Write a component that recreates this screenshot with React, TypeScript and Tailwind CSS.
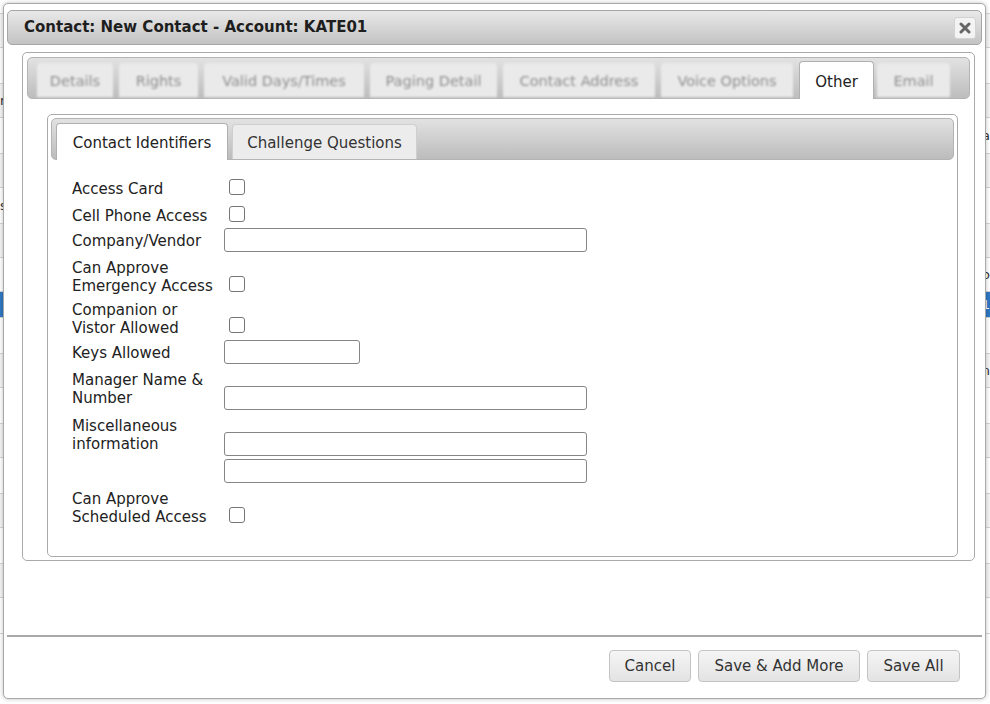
import React from 'react';

const outerTabs = [
  { label: 'Details', w: 'w-[76px]' },
  { label: 'Rights', w: 'w-[79px]' },
  { label: 'Valid Days/Times', w: 'w-[160px]' },
  { label: 'Paging Detail', w: 'w-[127px]' },
  { label: 'Contact Address', w: 'w-[152px]' },
  { label: 'Voice Options', w: 'w-[132px]' },
];

const bgRows = [
  { h: 'h-[14px]', blue: false },
  { h: 'h-[34px]', blue: false },
  { h: 'h-[36px]', blue: false },
  { h: 'h-[34px]', blue: false },
  { h: 'h-[36px]', blue: false },
  { h: 'h-[34px]', blue: false },
  { h: 'h-[36px]', blue: false },
  { h: 'h-[34px]', blue: false },
  { h: 'h-[34px]', blue: false },
  { h: 'h-[26px]', blue: true },
  { h: 'h-[36px]', blue: false },
  { h: 'h-[34px]', blue: false },
  { h: 'h-[36px]', blue: false },
  { h: 'h-[34px]', blue: false },
  { h: 'h-[36px]', blue: false },
  { h: 'h-[34px]', blue: false },
  { h: 'h-[36px]', blue: false },
  { h: 'h-[34px]', blue: false },
  { h: 'h-[36px]', blue: false },
];

const Checkbox = ({ className = '' }: { className?: string }) => (
  <span className={`block h-4 w-4 rounded-[3px] border border-[#767676] bg-white ${className}`} />
);

const TextBox = ({ w, className = '' }: { w: string; className?: string }) => (
  <input type="text" className={`block h-6 ${w} rounded-[3px] border border-[#858585] bg-white ${className}`} />
);

const Label = ({ children }: { children: React.ReactNode }) => (
  <div className="w-[152px] shrink-0 pt-[2px] text-[15px] leading-[18px] text-[#222]">{children}</div>
);

export default function App() {
  return (
    <div className="relative h-[704px] w-[990px] overflow-hidden bg-white font-['DejaVu_Sans',sans-serif]">
      {/* page behind the dialog */}
      <div className="flex flex-col">
        {bgRows.map((r, i) => (
          <div
            key={i}
            className={`${r.h} flex items-center justify-between border-b border-[#d4d4d4] px-0 text-[13px] ${
              r.blue ? 'bg-[#2f78c4] text-white' : i % 2 ? 'bg-[#f4f4f4] text-[#333]' : 'bg-white text-[#333]'
            }`}
          >
            <span>{i === 3 ? 'r' : i === 6 ? 's' : ''}</span>
            <span>{i === 4 ? 'ia' : i === 8 ? 'o' : r.blue ? '1' : i === 11 ? 'n' : ''}</span>
          </div>
        ))}
      </div>

      {/* dialog */}
      <div className="absolute left-[3px] top-[3px] flex h-[696px] w-[983px] flex-col rounded-[5px] border border-[#a9a9a9] bg-white px-[3px] pt-[6px] shadow-[0_0_4px_rgba(0,0,0,0.25)]">
        {/* title bar */}
        <div className="flex h-[35px] items-center justify-between rounded-[5px] border border-[#a6a6a6] bg-gradient-to-b from-[#e9e9e9] to-[#c3c3c3] pl-[16px] pr-[5px]">
          <span className="text-[15px] font-bold text-[#1e1e1e]">Contact: New Contact - Account: KATE01</span>
          <button className="flex h-[22px] w-[22px] items-center justify-center rounded-[3px] border border-[#d2d2d2] bg-[#f3f3f3]">
            <svg width="12" height="12" viewBox="0 0 12 12">
              <path d="M2 2 L10 10 M10 2 L2 10" stroke="#666" strokeWidth="3" strokeLinecap="round" />
            </svg>
          </button>
        </div>

        {/* outer tabs panel */}
        <div className="ml-[15px] mr-[7px] mt-[7px] flex h-[509px] flex-col rounded-[5px] border border-[#aaaaaa] p-[4px] pb-[3px]">
          <div className="flex h-[42px] items-end gap-[6px] rounded-[5px] border border-[#b4b4b4] bg-gradient-to-b from-[#e2e2e2] to-[#bdbdbd] pl-[9px]">
            {outerTabs.map((t) => (
              <div
                key={t.label}
                className={`${t.w} mb-[1px] flex h-[34px] items-center justify-center rounded-t-[4px] bg-[#eaeaea] pt-[3px] text-[14.5px] text-[#8e8e8e] blur-[0.9px]`}
              >
                {t.label}
              </div>
            ))}
            <div className="-mb-[1px] flex h-[38px] w-[75px] items-center justify-center rounded-t-[4px] border border-b-0 border-[#b0b0b0] bg-white pt-[3px] text-[15px] text-[#222]">
              Other
            </div>
            <div className="mb-[1px] -ml-[3px] flex h-[34px] w-[73px] items-center justify-center rounded-t-[4px] bg-[#eaeaea] pt-[3px] text-[14.5px] text-[#8e8e8e] blur-[0.9px]">
              Email
            </div>
          </div>

          {/* inner tabs panel */}
          <div className="ml-[20px] mr-[12px] mt-[15px] flex flex-1 flex-col rounded-[5px] border border-[#aaaaaa] p-[3px]">
            <div className="flex h-[42px] items-end gap-[4px] rounded-[5px] border border-[#b4b4b4] bg-gradient-to-b from-[#e2e2e2] to-[#bcbcbc] pl-[4px]">
              <div className="-mb-[1px] flex h-[37px] w-[172px] items-center justify-center rounded-t-[4px] border border-b-0 border-[#b0b0b0] bg-white pt-[3px] text-[15px] text-[#222]">
                Contact Identifiers
              </div>
              <div className="flex h-[35px] w-[185px] items-center justify-center rounded-t-[4px] border border-b-0 border-[#cfcfcf] bg-[#ececec] pt-[2px] text-[15px] text-[#333]">
                Challenge Questions
              </div>
            </div>

            {/* form */}
            <div className="flex flex-col pl-[21px] pt-[18px]">
              <div className="flex items-end">
                <Label>Access Card</Label>
                <Checkbox className="mb-[3px] ml-[5px]" />
              </div>
              <div className="mt-[7px] flex items-end">
                <Label>Cell Phone Access</Label>
                <Checkbox className="mb-[3px] ml-[5px]" />
              </div>
              <div className="mt-[3px] flex items-center">
                <Label>Company/Vendor</Label>
                <TextBox w="w-[363px]" />
              </div>
              <div className="mt-[5px] flex items-end">
                <Label>
                  Can Approve
                  <br />
                  Emergency Access
                </Label>
                <Checkbox className="mb-[3px] ml-[5px]" />
              </div>
              <div className="mt-[4px] flex items-end">
                <Label>
                  Companion or
                  <br />
                  Vistor Allowed
                </Label>
                <Checkbox className="mb-[4px] ml-[5px]" />
              </div>
              <div className="mt-[3px] flex items-center">
                <Label>Keys Allowed</Label>
                <TextBox w="w-[136px]" />
              </div>
              <div className="mt-[5px] flex items-end">
                <Label>
                  Manager Name &amp;
                  <br />
                  Number
                </Label>
                <TextBox w="w-[363px]" className="-mb-[3px]" />
              </div>
              <div className="mt-[8px] flex items-start">
                <Label>
                  Miscellaneous
                  <br />
                  information
                </Label>
                <div className="mt-[17px] flex flex-col gap-[3px]">
                  <TextBox w="w-[363px]" />
                  <TextBox w="w-[363px]" />
                </div>
              </div>
              <div className="mt-[5px] flex items-end">
                <Label>
                  Can Approve
                  <br />
                  Scheduled Access
                </Label>
                <Checkbox className="mb-[3px] ml-[5px]" />
              </div>
            </div>
          </div>
        </div>

        {/* footer */}
        <div className="mt-[74px] border-t-2 border-[#a8a8a8]" />
        <div className="flex justify-end gap-[7px] pr-[22px] pt-[13px]">
          <button className="h-[32px] w-[82px] rounded-[4px] border border-[#c4c4c4] bg-gradient-to-b from-[#f5f5f5] to-[#e3e3e3] text-[15px] text-[#333]">
            Cancel
          </button>
          <button className="h-[32px] w-[162px] rounded-[4px] border border-[#c4c4c4] bg-gradient-to-b from-[#f5f5f5] to-[#e3e3e3] text-[15px] text-[#333]">
            Save &amp; Add More
          </button>
          <button className="h-[32px] w-[93px] rounded-[4px] border border-[#c4c4c4] bg-gradient-to-b from-[#f5f5f5] to-[#e3e3e3] text-[15px] text-[#333]">
            Save All
          </button>
        </div>
      </div>
    </div>
  );
}
